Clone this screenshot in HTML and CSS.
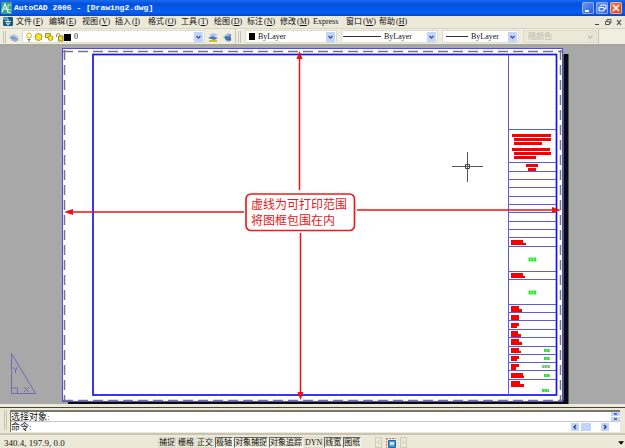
FILE: index.html
```html
<!DOCTYPE html>
<html lang="zh-CN">
<head>
<meta charset="utf-8">
<title>AutoCAD 2006 - [Drawing2.dwg]</title>
<link rel="stylesheet" href="styles.css">
</head>
<body>
<div class="app">
  <header class="titlebar">
    <svg class="logo" viewBox="0 0 11 12" aria-hidden="true">
      <rect width="11" height="12" fill="#3f9f8e"/>
      <path d="M1 10 4 2l3 8M2 7h4" fill="none" stroke="#e8fff4" stroke-width="1.2"/>
      <path d="M10 3H7v5h3M6 10l4 1" fill="none" stroke="#bdf0d0" stroke-width="1"/>
    </svg>
    <h1>AutoCAD 2006 - [Drawing2.dwg]</h1>
    <div class="winbtns">
      <button type="button" aria-label="最小化"><svg viewBox="0 0 12 12"><path d="M3 9h4" stroke="#fff" stroke-width="2"/></svg></button>
      <button type="button" aria-label="还原"><svg viewBox="0 0 12 12"><path d="M5 4.500V3h5v4H8M3 5.500h5V9H3z" fill="none" stroke="#fff"/></svg></button>
      <button type="button" class="close" aria-label="关闭"><svg viewBox="0 0 12 12"><path d="m3 3 6 6m0-6L3 9" stroke="#fff" stroke-width="1.500"/></svg></button>
    </div>
  </header>

  <nav class="menubar">
    <svg class="docicon" viewBox="0 0 10 10" aria-hidden="true">
      <rect width="10" height="9" rx="1" fill="#1c5a86"/>
      <path d="M0 0h5v3H0z" fill="#4b9fc4"/>
      <path d="M2 4.500h6M5 2v6M3 6l2 2 2-2" stroke="#e6f6ff" fill="none"/>
    </svg>
    <ul>
      <li><button type="button">文件<span>(<u>F</u>)</span></button></li>
      <li><button type="button">编辑<span>(<u>E</u>)</span></button></li>
      <li><button type="button">视图<span>(<u>V</u>)</span></button></li>
      <li><button type="button">插入<span>(<u>I</u>)</span></button></li>
      <li><button type="button">格式<span>(<u>O</u>)</span></button></li>
      <li><button type="button">工具<span>(<u>T</u>)</span></button></li>
      <li><button type="button">绘图<span>(<u>D</u>)</span></button></li>
      <li><button type="button">标注<span>(<u>N</u>)</span></button></li>
      <li><button type="button">修改<span>(<u>M</u>)</span></button></li>
      <li><button type="button">Express</button></li>
      <li><button type="button">窗口<span>(<u>W</u>)</span></button></li>
      <li><button type="button">帮助<span>(<u>H</u>)</span></button></li>
    </ul>
    <div class="docbtns">
      <button type="button" aria-label="最小化图形"><svg viewBox="0 0 8 8"><path d="M2 6.500h4" stroke="#444"/></svg></button>
      <button type="button" aria-label="还原图形"><svg viewBox="0 0 8 8"><path d="M3 3V1.500h4V5H6M1.500 3.500h4v3h-4z" fill="none" stroke="#555"/></svg></button>
      <button type="button" aria-label="关闭图形"><svg viewBox="0 0 8 8"><path d="m2 2 4 5m0-5L2 7" stroke="#444" stroke-width="1.200"/></svg></button>
    </div>
  </nav>

  <div class="toolstrip">
    <div class="toolbar">
      <i class="grip"></i>
      <button type="button" class="tool" aria-label="图层特性管理器"><svg viewBox="0 0 12 12"><path d="m1 5 5-2 5 3-5 2z" fill="#b9cbe0"/><path d="m1 7 4-2 6 3-4 2z" fill="#7f9dc4"/><path d="m3 9 3-1 5 1-4 2z" fill="#9aaecb"/></svg></button>
      <div class="combo layer">
        <svg class="states" viewBox="0 0 47 12" aria-hidden="true">
          <circle cx="5" cy="4.500" r="2.500" fill="#fffbc0" stroke="#c5b83a"/><path d="M3.500 8.500h3M4 10h2" stroke="#777"/>
          <circle cx="14.500" cy="6" r="3.500" fill="#f4e52c" stroke="#a79f20"/>
          <path d="M21.500 2.500h5v4h-5z" fill="#eee04a" stroke="#999128"/><circle cx="26.500" cy="7" r="2.500" fill="#f4e52c" stroke="#a79f20"/>
          <path d="M32.500 6V3.500q2-2 3.500 0V6" fill="none" stroke="#9a9120"/><path d="M34.500 5H39v5h-4.500z" fill="#eadb35" stroke="#8f8720"/>
          <path d="M40 3h7v7h-7z" fill="#000"/>
        </svg>
        <select aria-label="图层"><option>0</option></select>
        <svg class="arrow" viewBox="0 0 9 10" aria-hidden="true"><path d="m2.500 4 2 2 2-2" /></svg>
      </div>
      <button type="button" class="tool" aria-label="将对象的图层置为当前"><svg viewBox="0 0 12 12"><path d="m2 4 4-2 5 2-4 2z" fill="#a9c4e8"/><path d="m1 7 4-2 6 2-4 2z" fill="#4d77b8"/><path d="M2 10h8" stroke="#d9bd2c" stroke-width="2"/></svg></button>
      <button type="button" class="tool" aria-label="上一个图层"><svg viewBox="0 0 12 12"><path d="m2 6 5-4 3 2v6l-4 1z" fill="#9db9dc"/><path d="M9 3v6M4 6h4l2 3H6z" stroke="#35639f" fill="#4f7bb8"/></svg></button>
    </div>
    <div class="toolbar props">
      <i class="grip"></i>
      <div class="combo color">
        <i class="swatch"></i>
        <select aria-label="颜色"><option>ByLayer</option></select>
        <svg class="arrow" viewBox="0 0 9 10" aria-hidden="true"><path d="m2.500 4 2 2 2-2"/></svg>
      </div>
      <div class="combo linetype">
        <i class="line"></i>
        <select aria-label="线型"><option>ByLayer</option></select>
        <svg class="arrow" viewBox="0 0 9 10" aria-hidden="true"><path d="m2.500 4 2 2 2-2"/></svg>
      </div>
      <div class="combo weight">
        <i class="line"></i>
        <select aria-label="线宽"><option>ByLayer</option></select>
        <svg class="arrow" viewBox="0 0 9 10" aria-hidden="true"><path d="m2.500 4 2 2 2-2"/></svg>
      </div>
      <div class="combo plot off">
        <select aria-label="打印样式" disabled><option>随颜色</option></select>
        <svg class="arrow" viewBox="0 0 9 10" aria-hidden="true"><path d="m2.500 4 2 2 2-2"/></svg>
      </div>
    </div>
  </div>

  <main class="canvas">
    <svg class="drawing" viewBox="0 46 625 358" role="img" aria-label="图纸布局">
      <path d="M566 54v349H68" fill="none" stroke="#0a0a10" stroke-width="5"/>
      <rect x="62.500" y="48.500" width="500" height="353" fill="#fff" stroke="#4a4af0"/>
      <path class="margin" d="M63 51.500h499M64.500 50v351M560.500 50v351M63 400.500h499"/>
      <rect x="93" y="54.500" width="463.500" height="340.500" fill="none" stroke="#1414f0" stroke-width="1.700"/>
      <path class="rules" d="M508.500 55v340M508 129.500h48M508 162.500h48M508 171.500h48M508 179.500h48M508 187.500h48M508 196.500h48M508 204.500h48M508 212.500h48M508 221.500h48M508 229.500h48M508 237.500h48M508 246.500h48M508 271.500h48M508 279.500h48M508 304.500h48M508 312.500h48M508 320.500h48M508 329.500h48M508 337.500h48M508 346.500h48M508 354.500h48M508 362.500h48M508 370.500h48M508 379.500h48"/>
      <path fill="#f80000" d="M512 134h39v3h-39zM514 138h37v3h-37zM514 142h28v3h-28zM512 148h38v3h-38zM514 152h37v3h-37zM514 156h22v3h-22zM526 164h12v3h-12zM528 168h8v3h-8zM511 240h12v3h3v2h-15zM511 273h12v3h2v2h-14zM511 306h8v3h3v3h-11zM511 315h8v5h-8zM511 323h8v3h-2v2h-6zM511 331h7v3h3v3h-10zM511 339h8v3h3v3h-11zM511 348h8v3h2v2h-10zM511 356h8v3h-2v2h-6zM511 364h8v3h-3v3h-5zM511 373h12v3h1v2h-13zM511 381h9v3h4v3h-13z"/>
      <path stroke="#28ec28" stroke-width="4" stroke-dasharray="2.300 .4" d="M528.500 259.500h8M528.500 292.500h8"/>
      <path stroke="#30e430" stroke-width="3" stroke-dasharray="2.500 .3" d="M544 350.500h6M544 358.500h6M544 375.500h6M542 390.500h7"/>
      <path stroke="#7ac87a" stroke-width="3" stroke-dasharray="2.500 .3" d="M542 366.500h8"/>
      <path d="M452 166.500h31M467.500 152v30" stroke="#555"/>
      <path d="M465.500 164.500h4v4h-4z" fill="none" stroke="#444"/>
      <g class="ucs">
        <path d="M11.500 353.500v40h24zM11.500 388h6v5.500"/>
        <path d="m13 367 2.500 3 2-3m-2 3v3M24 387l5 5m0-5-5 5"/>
      </g>
      <g stroke="#f01010" stroke-width="1.500" fill="#f01010">
        <path d="M299.500 56v134M300.500 233v162M68 212h176M357 210h200"/>
        <path stroke="none" d="m299.500 51 3 8h-6zM300.500 400l3-8h-6zM64 212l9-3v6zM561 210l-9-3v6z"/>
      </g>
      <rect x="246" y="194" width="108.500" height="36.500" rx="5" fill="#fff" stroke="#ee1c1c" stroke-width="1.700"/>
      <text class="note" x="251" y="209">虚线为可打印范围</text>
      <text class="note" x="251" y="225">将图框包围在内</text>
    </svg>
  </main>

  <section class="command">
    <i class="grip"></i>
    <div class="cmdbox">
      <div class="history">
        <p>选择对象:</p>
        <div class="vscroll"><button type="button" aria-label="向上滚动"></button><button type="button" aria-label="向下滚动"></button></div>
      </div>
      <div class="prompt">
        <label for="cmd">命令:</label>
        <input id="cmd" type="text">
        <div class="hscroll">
          <button type="button" aria-label="向左滚动"><svg viewBox="0 0 8 8"><path d="M5 2 3 4l2 2"/></svg></button>
          <i></i>
          <button type="button" aria-label="向右滚动"><svg viewBox="0 0 8 8"><path d="m3 2 2 2-2 2"/></svg></button>
        </div>
      </div>
    </div>
  </section>

  <footer class="status">
    <output>340.4, 197.9, 0.0</output>
    <div class="modes">
      <button type="button">捕捉</button>
      <button type="button">栅格</button>
      <button type="button">正交</button>
      <button type="button" class="on">极轴</button>
      <button type="button" class="on">对象捕捉</button>
      <button type="button" class="on">对象追踪</button>
      <button type="button">DYN</button>
      <button type="button" class="on">线宽</button>
      <button type="button" class="on">图纸</button>
    </div>
    <div class="viewport">
      <button type="button" aria-label="上一个视口"><svg viewBox="0 0 6 10"><path d="M4 3 2 5l2 2" fill="none" stroke="#aaa"/></svg></button>
      <button type="button" class="max" aria-label="最大化视口"><svg viewBox="0 0 12 12"><path d="M1 1.500h10M1.500 1v10" stroke="#d07060" stroke-dasharray="2 1"/><path d="M3.500 3.500h7v7h-7z" fill="#4f9ad0" stroke="#1f66a4"/><path d="M5 5h4v3H5z" fill="#c8e4f6"/></svg></button>
      <button type="button" aria-label="下一个视口"><svg viewBox="0 0 6 10"><path d="m2 3 2 2-2 2" fill="none" stroke="#aaa"/></svg></button>
    </div>
    <button type="button" class="tray" aria-label="状态栏菜单"><svg viewBox="0 0 6 6"><path d="M1 2h5L3.500 5z"/></svg></button>
  </footer>
</div>
</body>
</html>
```
FILE: styles.css
```css
* {
  box-sizing: border-box;
}

body {
  margin: 0;
  background: #ece9d8;
  color: #111;
  font: 8px/10px "Liberation Serif", "Noto Sans CJK SC", serif;
}

button,
select,
input {
  margin: 0;
  padding: 0;
  border: 0;
  border-radius: 0;
  background: none;
  color: inherit;
  font: inherit;
}

svg {
  display: block;
}

.app {
  display: flex;
  flex-direction: column;
  min-height: 100vh;
}

.titlebar {
  display: flex;
  align-items: center;
  height: 16px;
  padding: 0 3px 0 1px;
  gap: 2px;
  background: linear-gradient(#1a6cf0, #0450dc 25%, #0560f4 75%, #0348c8);
}

.logo {
  width: 11px;
  height: 12px;
}

.titlebar h1 {
  flex: 1;
  margin: 0;
  color: #fff;
  font: bold 8px/12px "Liberation Mono", monospace;
}

.winbtns {
  display: flex;
  gap: 2px;
}

.winbtns button {
  width: 12px;
  height: 12px;
  border-radius: 2px;
  background: linear-gradient(135deg, #6f9cf4, #2258dc);
  box-shadow: inset 0 0 0 1px #8fb0f4;
}

.winbtns .close {
  background: linear-gradient(135deg, #f08460, #d83c14);
  box-shadow: inset 0 0 0 1px #f0a890;
}

.menubar {
  display: flex;
  align-items: center;
  height: 12px;
  padding: 0 2px 0 3px;
  gap: 3px;
}

.docicon {
  width: 10px;
  height: 10px;
}

.menubar ul {
  display: flex;
  flex: 1;
  margin: 0;
  padding: 0;
  list-style: none;
}

.menubar li {
  width: 33px;
}

.menubar li button {
  display: block;
  white-space: nowrap;
}

.menubar span {
  margin-left: 1px;
}

.docbtns {
  display: flex;
  gap: 3px;
}

.docbtns button {
  width: 8px;
}

.toolstrip {
  display: flex;
  height: 18px;
  border-top: 1px solid #d8d4c4;
  border-bottom: 2px solid #a8a69c;
  background: #f0eee0;
}

.toolbar {
  display: flex;
  align-items: center;
  padding: 0 2px 0 3px;
  gap: 2px;
  border-right: 1px solid #cac6b4;
}

.props {
  padding: 0 1px 0 2px;
  gap: 4px;
}

.grip {
  width: 3px;
  height: 12px;
  border: solid #c8c4b2;
  border-width: 0 1px;
}

.tool {
  width: 12px;
}

.combo {
  display: flex;
  align-items: center;
  height: 13px;
  padding: 1px;
  border: 1px solid #dcdccc;
  background: #fff;
}

.combo select {
  flex: 1;
  min-width: 0;
  height: 10px;
  padding: 0 0 0 3px;
  appearance: none;
  line-height: 10px;
}

.arrow {
  flex: none;
  width: 9px;
  height: 10px;
  background: #c3d3fc;
}

.arrow path {
  fill: none;
  stroke: #3c5a94;
  stroke-width: 1.500;
}

.states {
  width: 47px;
  height: 12px;
}

.layer {
  width: 183px;
}

.color {
  width: 92px;
}

.linetype {
  width: 97px;
}

.weight {
  width: 77px;
}

.plot {
  width: 74px;
}

.swatch {
  width: 6px;
  height: 7px;
  margin-left: 2px;
  background: #000;
}

.line {
  width: 38px;
  height: 1px;
  background: #333;
}

.weight .line {
  width: 22px;
  margin-left: 2px;
}

.off {
  background: #ece9d8;
}

.off select {
  color: #bcb8a8;
  opacity: 1;
}

.off .arrow {
  background: #e8e5d6;
}

.off .arrow path {
  stroke: #c4c0b0;
}

.canvas {
  background: #a8a8a8;
}

.drawing {
  width: 100%;
  height: auto;
}

.margin {
  stroke: #777;
  stroke-width: 1.500;
  stroke-dasharray: 10 5;
}

.rules {
  fill: none;
  stroke: #5a5ae8;
}

.ucs {
  fill: none;
  stroke: #7468b4;
}

.note {
  fill: #e42020;
  font: 12px "Noto Sans CJK SC", sans-serif;
}

.command {
  display: flex;
  gap: 3px;
  margin-top: 3px;
  padding: 2px 5px 0 4px;
  border-top: 1px solid #44443c;
}

.command .grip {
  height: 20px;
}

.cmdbox {
  flex: 1;
  border-top: 2px solid #77776c;
  border-left: 1px solid #77776c;
  background: #fff;
  font-size: 9px;
}

.history,
.prompt {
  display: flex;
  align-items: center;
  height: 10px;
}

.history {
  border-bottom: 1px solid #c8c8c8;
}

.history p {
  flex: 1;
  margin: 0;
}

.vscroll {
  display: flex;
  flex-direction: column;
  gap: 1px;
}

.vscroll button {
  width: 9px;
  height: 4px;
  border: solid #c3d3fc;
  border-width: 1px 3px;
  background: #5874b0;
}

.prompt input {
  flex: 1;
  min-width: 0;
  height: 9px;
}

.hscroll {
  display: flex;
  margin-right: 11px;
  gap: 2px;
}

.hscroll button {
  width: 8px;
  height: 8px;
  background: #c3d3fc;
}

.hscroll i {
  width: 10px;
  margin-right: 8px;
  background: #c3d3fc;
}

.hscroll path {
  fill: none;
  stroke: #2c4880;
  stroke-width: 1.500;
}

.status {
  display: flex;
  align-items: center;
  height: 15px;
  margin-top: auto;
  padding: 2px 1px 0 4px;
  border-top: 2px solid #c8c5b6;
}

.status output {
  width: 154px;
  font-size: 9px;
}

.modes {
  display: flex;
  gap: 1px;
}

.modes button {
  height: 11px;
  border: 1px solid #dedac8;
  line-height: 9px;
  white-space: nowrap;
}

.modes .on {
  border-color: #666 #f8f8f0 #f8f8f0 #666;
}

.viewport {
  display: flex;
  flex: 1;
  align-items: center;
  margin-left: 14px;
  gap: 3px;
}

.viewport button {
  width: 7px;
  border: 1px solid #d0ccbc;
}

.viewport .max {
  width: 12px;
  border: 0;
}

.tray {
  width: 7px;
}
```
